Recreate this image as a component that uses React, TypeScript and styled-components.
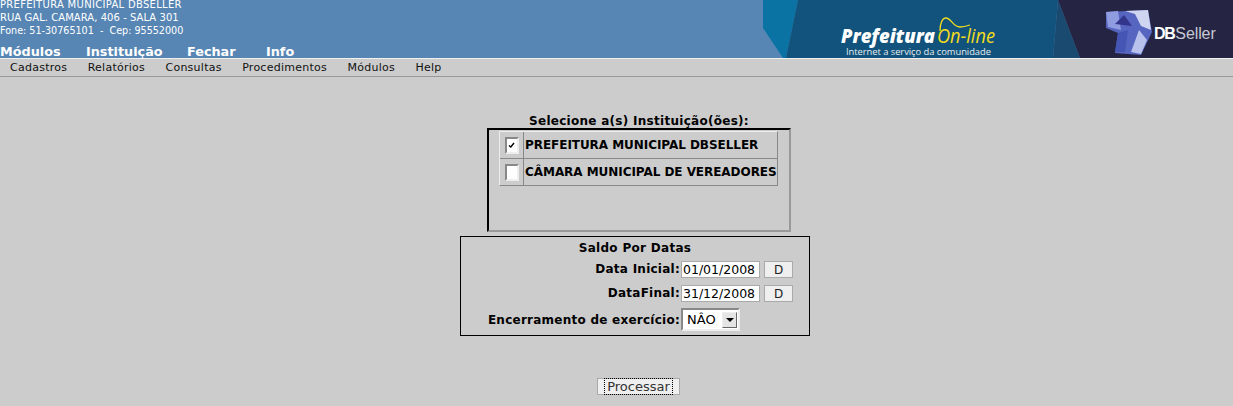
import * as React from "react";
import styled, { createGlobalStyle } from "styled-components";

const Global = createGlobalStyle`
  html, body {
    margin: 0;
    padding: 0;
    background: #cccccc;
    font-family: "DejaVu Sans", Verdana, sans-serif;
    color: #000;
  }
`;

const Page = styled.div`
  width: 1233px;
  height: 406px;
  overflow: hidden;
  display: flex;
  flex-direction: column;
`;

const Header = styled.header`
  height: 58px;
  display: flex;
  justify-content: space-between;
  background: #5786b4;
  border-bottom: 1px solid #f0f0f0;
`;

const HeaderInfo = styled.div`
  display: flex;
  flex-direction: column;
  color: #fff;
`;

const InfoLine = styled.div<{ $size: number; $sp: number }>`
  font-size: ${(p) => p.$size}px;
  letter-spacing: ${(p) => p.$sp}px;
  line-height: 13px;
  height: 13px;
  white-space: pre;
  &:first-child {
    margin-top: -2px;
  }
`;

const TopNav = styled.nav`
  display: flex;
  margin-top: 7px;
`;

const TopLink = styled.span<{ $w: number }>`
  width: ${(p) => p.$w}px;
  font-size: 12.8px;
  line-height: 16px;
  font-weight: bold;
  color: #fff;
`;

const Banner = styled.svg`
  display: block;
  width: 470px;
  height: 58px;
`;

const MenuBar = styled.nav`
  height: 17px;
  display: flex;
  padding-left: 10px;
  gap: 20.5px;
  align-items: center;
  background: #cccccc;
  border-bottom: 1px solid #999;
`;

const MenuItem = styled.span`
  font-size: 11px;
  color: #111;
  letter-spacing: 0.25px;
`;

const Main = styled.main`
  display: flex;
  flex-direction: column;
  align-items: flex-start;
  padding: 35px 0 0 460px;
`;

const Heading = styled.div`
  width: 304px;
  height: 16px;
  margin-left: 27px;
  text-align: center;
  font-size: 12px;
  letter-spacing: 0.28px;
  line-height: 18px;
  font-weight: bold;
`;

const ListBox = styled.div`
  box-sizing: border-box;
  width: 304px;
  height: 104px;
  margin-left: 27px;
  padding: 1px 0 0 10px;
  border-style: solid;
  border-width: 2px;
  border-color: #000 #999 #999 #000;
`;

const InstTable = styled.div`
  box-sizing: border-box;
  width: 279px;
  height: 55px;
  border: 1px solid #888;
  border-top-color: #eee;
  border-left-color: #eee;
  display: flex;
  flex-direction: column;
`;

const InstRow = styled.div`
  flex: 1;
  display: flex;
  align-items: center;
  &:first-child {
    border-bottom: 1px solid #888;
  }
`;

const CheckCell = styled.div`
  box-sizing: border-box;
  width: 24px;
  height: 100%;
  display: flex;
  align-items: center;
  justify-content: center;
  border-right: 1px solid #888;
`;

const CheckMark = styled.span`
  box-sizing: border-box;
  width: 14px;
  height: 17px;
  display: flex;
  align-items: center;
  justify-content: center;
  background: #fff;
  border-style: solid;
  border-width: 2px;
  border-color: #888 #eee #eee #888;
`;

const InstName = styled.span`
  padding-left: 1px;
  font-size: 12px;
  letter-spacing: -0.05px;
  font-weight: bold;
  white-space: nowrap;
`;

const Fieldset = styled.section`
  box-sizing: border-box;
  width: 350px;
  height: 100px;
  margin-top: 4px;
  padding-top: 3px;
  border: 1px solid #000;
  display: flex;
  flex-direction: column;
`;

const FieldTitle = styled.div`
  text-align: center;
  font-size: 12px;
  letter-spacing: 0.3px;
  line-height: 16px;
  font-weight: bold;
  margin-bottom: 3px;
`;

const FieldRow = styled.div<{ $mt?: number }>`
  display: grid;
  grid-template-columns: 219px auto auto;
  justify-content: start;
  align-items: center;
  height: 20px;
  margin-top: ${(p) => p.$mt ?? 3}px;
`;

const FieldLabel = styled.label`
  text-align: right;
  font-size: 12px;
  letter-spacing: 0.25px;
  font-weight: bold;
  white-space: nowrap;
`;

const DateInput = styled.div`
  box-sizing: border-box;
  width: 79px;
  height: 17px;
  margin-left: 1px;
  padding-left: 1px;
  background: #fff;
  border: 1px solid #aaa;
  font-size: 12.5px;
  line-height: 16px;
`;

const SmallButton = styled.div`
  box-sizing: border-box;
  width: 29px;
  height: 17px;
  margin-left: 4px;
  background: #efefef;
  border: 1px solid #aaa;
  text-align: center;
  font-size: 12px;
  line-height: 16px;
  color: #222;
`;

const Select = styled.div`
  box-sizing: border-box;
  width: 59px;
  height: 23px;
  margin-left: 1px;
  padding-left: 4px;
  display: flex;
  align-items: center;
  justify-content: space-between;
  background: #fff;
  border-style: solid;
  border-width: 2px;
  border-color: #888 #eee #eee #888;
  font-size: 13px;
`;

const SelectArrow = styled.span`
  box-sizing: border-box;
  width: 15px;
  height: 16px;
  margin-right: 1px;
  display: flex;
  align-items: center;
  justify-content: center;
  background: #e4e4e4;
  border-style: solid;
  border-width: 1px;
  border-color: #eee #666 #666 #eee;
  &::after {
    content: "";
    border-style: solid;
    border-width: 4px 4px 0 4px;
    border-color: #000 transparent transparent transparent;
  }
`;

const SubmitButton = styled.div`
  box-sizing: border-box;
  width: 83px;
  height: 17px;
  margin: 42px 0 0 137px;
  background: #efefef;
  border: 1px solid #aaa;
  text-align: center;
  font-size: 13px;
  line-height: 16px;
  color: #333;
`;

const SubmitLabel = styled.span`
  outline: 1px dotted #000;
  outline-offset: 0;
  padding: 0 2px;
`;

function BannerArt() {
  return (
    <Banner viewBox="0 0 470 58">
      <defs>
        <filter id="soft">
          <feGaussianBlur stdDeviation="0.7" />
        </filter>
      </defs>
      <polygon points="0,0 35,0 23,58 20,58 0,28" fill="#0b73a4" />
      <polygon points="35,0 295,0 290,58 23,58" fill="#11537c" />
      <polygon points="295,0 317,58 290,58" fill="#1b4a70" />
      <polygon points="295,0 470,0 470,58 317,58" fill="#252543" />
      <text
        x="78"
        y="43"
        fontFamily="'Open Sans', sans-serif"
        fontSize="19"
        fontWeight="800"
        fontStyle="italic"
        fill="#fff"
        textLength="94"
        lengthAdjust="spacingAndGlyphs"
      >
        Prefeitura
      </text>
      <text
        x="174"
        y="43"
        fontFamily="'Open Sans', sans-serif"
        fontSize="20"
        fontStyle="italic"
        fill="#f3dc1c"
        textLength="58"
        lengthAdjust="spacingAndGlyphs"
      >
        On-line
      </text>
      <path
        d="M177 31 C177 24 179 18 183 18 C188 18 190 27 197 27 C201 27 204 26 207 25"
        fill="none"
        stroke="#f3dc1c"
        strokeWidth="1.3"
      />
      <text
        x="83"
        y="54.5"
        fontFamily="'Open Sans', sans-serif"
        fontSize="9.4"
        fill="#e4ebf0"
        textLength="145"
      >
        Internet a serviço da comunidade
      </text>
      <g filter="url(#soft)">
        <polygon points="343,12 385,10 389,32 378,55 352,53 355,33 343,28" fill="#5565c0" />
        <polygon points="343,12 355,11 358,30 345,27" fill="#8f9ce0" />
        <polygon points="362,11 385,10 388,30 378,26 372,14" fill="#cfd4f0" />
        <polygon points="352,24 361,15 369,26" fill="#30348a" />
        <polygon points="376,30 384,40 378,54 368,52" fill="#b9c2ec" />
        <polygon points="355,33 365,30 362,52 352,52" fill="#4454b4" />
      </g>
      <text
        x="391"
        y="39"
        fontFamily="'Liberation Sans', sans-serif"
        fontSize="16"
        fill="#c8c8d4"
      >
        <tspan fontWeight="bold" fill="#fff" letterSpacing="-1.4">
          DB
        </tspan>
        <tspan dx="1" letterSpacing="-0.1">
          Seller
        </tspan>
      </text>
    </Banner>
  );
}

export default function App() {
  return (
    <Page>
      <Global />
      <Header>
        <HeaderInfo>
          <InfoLine $size={10} $sp={0.3}>PREFEITURA MUNICIPAL DBSELLER</InfoLine>
          <InfoLine $size={10} $sp={0.05}>RUA GAL. CAMARA, 406 - SALA 301</InfoLine>
          <InfoLine $size={9.6} $sp={0}>{"Fone: 51-30765101  -  Cep: 95552000"}</InfoLine>
          <TopNav>
            <TopLink $w={86}>Módulos</TopLink>
            <TopLink $w={101}>Instituição</TopLink>
            <TopLink $w={79}>Fechar</TopLink>
            <TopLink $w={40}>Info</TopLink>
          </TopNav>
        </HeaderInfo>
        <BannerArt />
      </Header>
      <MenuBar>
        {["Cadastros", "Relatórios", "Consultas", "Procedimentos", "Módulos", "Help"].map((m) => (
          <MenuItem key={m}>{m}</MenuItem>
        ))}
      </MenuBar>
      <Main>
        <Heading>Selecione a(s) Instituição(ões):</Heading>
        <ListBox>
          <InstTable>
            <InstRow>
              <CheckCell>
                <CheckMark>
                  <svg width="7" height="6" viewBox="0 0 7 6">
                    <path d="M1 3.5 L2.8 5 L6 1" fill="none" stroke="#000" strokeWidth="1.4" />
                  </svg>
                </CheckMark>
              </CheckCell>
              <InstName>PREFEITURA MUNICIPAL DBSELLER</InstName>
            </InstRow>
            <InstRow>
              <CheckCell>
                <CheckMark />
              </CheckCell>
              <InstName>CÂMARA MUNICIPAL DE VEREADORES</InstName>
            </InstRow>
          </InstTable>
        </ListBox>
        <Fieldset>
          <FieldTitle>Saldo Por Datas</FieldTitle>
          <FieldRow $mt={0}>
            <FieldLabel>Data Inicial:</FieldLabel>
            <DateInput>01/01/2008</DateInput>
            <SmallButton>D</SmallButton>
          </FieldRow>
          <FieldRow $mt={4}>
            <FieldLabel>DataFinal:</FieldLabel>
            <DateInput>31/12/2008</DateInput>
            <SmallButton>D</SmallButton>
          </FieldRow>
          <FieldRow $mt={5}>
            <FieldLabel>Encerramento de exercício:</FieldLabel>
            <Select>
              NÂO
              <SelectArrow />
            </Select>
          </FieldRow>
        </Fieldset>
        <SubmitButton>
          <SubmitLabel>Processar</SubmitLabel>
        </SubmitButton>
      </Main>
    </Page>
  );
}
